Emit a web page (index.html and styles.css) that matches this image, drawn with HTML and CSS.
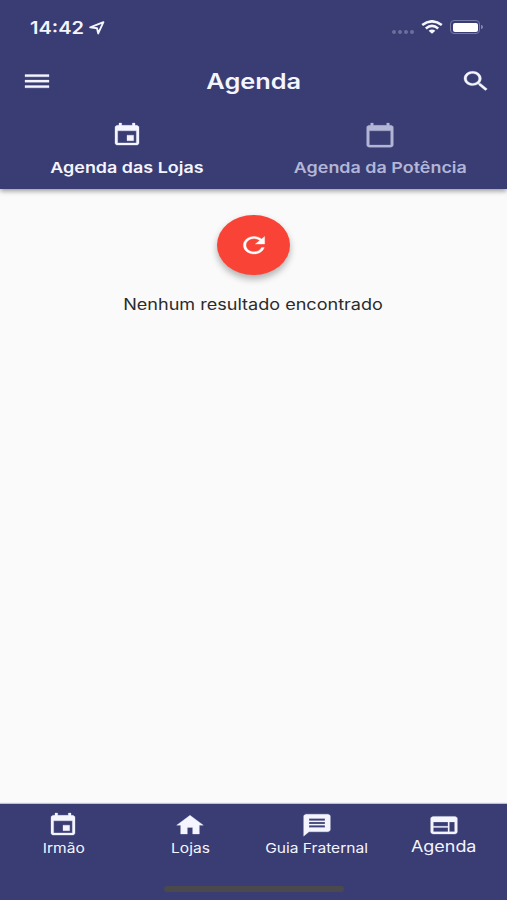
FILE: index.html
```
<!DOCTYPE html>
<html lang="pt-BR">
<head>
  <meta charset="UTF-8" />
  <meta name="viewport" content="width=device-width, initial-scale=1.0"/>
  <title>Agenda</title>
  <link rel="stylesheet" href="styles.css">
</head>
<body>
  <header class="header">
    <div class="status-bar">
      <div class="status-left">
        <span class="text time">14:42</span>
        <svg class="location" viewBox="0 0 16 14"><path d="M1.2 6.4L14.4 1.2L9.2 12.4L8 7.2Z" fill="none" stroke="currentColor" stroke-width="1.9" stroke-linejoin="round"/></svg>
      </div>
      <div class="status-right">
        <div class="signal"><i></i><i></i><i></i><i></i></div>
        <svg class="wifi" viewBox="0 0 22 14">
          <g fill="none" stroke="currentColor" stroke-width="2.6">
            <path d="M1.2 5Q11 -2.4 20.8 5"/>
            <path d="M4.8 8.5Q11 3.4 17.2 8.5"/>
          </g>
          <path d="M7.6 10.8Q11 8 14.4 10.8L11 13.7Z" fill="currentColor"/>
        </svg>
        <div class="battery"><div class="battery-level"></div></div>
      </div>
    </div>

    <div class="app-bar">
      <svg class="icon" viewBox="0 0 24 24" preserveAspectRatio="none"><path d="M3 18h18v-2H3v2zm0-5h18v-2H3v2zm0-7v2h18V6H3z"/></svg>
      <h1 class="text title">Agenda</h1>
      <svg class="icon" viewBox="0 0 24 24" preserveAspectRatio="none"><path d="M15.5 14h-.79l-.28-.27C15.41 12.59 16 11.11 16 9.5 16 5.91 13.09 3 9.5 3S3 5.91 3 9.5 5.91 16 9.5 16c1.61 0 3.09-.59 4.23-1.57l.27.28v.79l5 4.99L20.49 19l-4.99-5zm-6 0C7.01 14 5 11.99 5 9.5S7.01 5 9.5 5 14 7.01 14 9.5 11.99 14 9.5 14z"/></svg>
    </div>

    <nav class="tabs">
      <div class="tab active">
        <svg class="icon" viewBox="0 0 24 24" preserveAspectRatio="none"><path d="M17 12h-5v5h5v-5zM16 1v2H8V1H6v2H5c-1.11 0-1.99.9-1.99 2L3 19c0 1.1.89 2 2 2h14c1.1 0 2-.9 2-2V5c0-1.1-.9-2-2-2h-1V1h-2zm3 18H5V8h14v11z"/></svg>
        <span class="text tab-label">Agenda das Lojas</span>
      </div>
      <div class="tab">
        <svg class="icon" viewBox="0 0 24 24" preserveAspectRatio="none"><path d="M20 3h-1V1h-2v2H7V1H5v2H4c-1.1 0-2 .9-2 2v16c0 1.1.9 2 2 2h16c1.1 0 2-.9 2-2V5c0-1.1-.9-2-2-2zm0 18H4V8h16v13z"/></svg>
        <span class="text tab-label">Agenda da Potência</span>
      </div>
    </nav>
  </header>

  <main class="content">
    <button class="refresh" aria-label="Atualizar">
      <svg class="icon" viewBox="0 0 24 24" preserveAspectRatio="none"><path d="M17.65 6.35C16.2 4.9 14.21 4 12 4c-4.42 0-7.99 3.58-7.99 8s3.57 8 7.99 8c3.73 0 6.84-2.55 7.73-6h-2.08c-.82 2.33-3.04 4-5.65 4-3.31 0-6-2.69-6-6s2.69-6 6-6c1.66 0 3.14.69 4.22 1.78L13 11h7V4l-2.35 2.35z"/></svg>
    </button>
    <p class="text message">Nenhum resultado encontrado</p>
  </main>

  <footer class="bottom">
    <nav class="bottom-nav">
      <div class="nav-item">
        <svg class="icon" viewBox="0 0 24 24" preserveAspectRatio="none"><path d="M17 12h-5v5h5v-5zM16 1v2H8V1H6v2H5c-1.11 0-1.99.9-1.99 2L3 19c0 1.1.89 2 2 2h14c1.1 0 2-.9 2-2V5c0-1.1-.9-2-2-2h-1V1h-2zm3 18H5V8h14v11z"/></svg>
        <span class="text nav-label">Irmão</span>
      </div>
      <div class="nav-item">
        <svg class="icon" viewBox="0 0 24 24" preserveAspectRatio="none"><path d="M10 20v-6h4v6h5v-8h3L12 3 2 12h3v8z"/></svg>
        <span class="text nav-label">Lojas</span>
      </div>
      <div class="nav-item">
        <svg class="icon" viewBox="0 0 24 24" preserveAspectRatio="none"><path d="M20 2H4c-1.1 0-1.99.9-1.99 2L2 22l4-4h14c1.1 0 2-.9 2-2V4c0-1.1-.9-2-2-2zM6 9h12v2H6V9zm12 5H6v-2h12v2zm0-6H6V6h12v2z"/></svg>
        <span class="text nav-label">Guia Fraternal</span>
      </div>
      <div class="nav-item selected">
        <svg class="icon" viewBox="0 0 24 24" preserveAspectRatio="none"><path d="M20 4H4c-1.1 0-1.99.9-1.99 2L2 18c0 1.1.9 2 2 2h16c1.1 0 2-.9 2-2V6c0-1.1-.9-2-2-2zm-5 14H4v-4h11v4zm0-5H4V9h11v4zm5 5h-4V9h4v9z"/></svg>
        <span class="text nav-label">Agenda</span>
      </div>
    </nav>
    <div class="home-indicator"></div>
  </footer>
</body>
</html>
```
FILE: styles.css
```
* {
  box-sizing: border-box;
}

body {
  margin: 0;
  height: 900px;
  display: flex;
  flex-direction: column;
  font-family: Inter, 'Liberation Sans', sans-serif;
  background-color: #fafafa;
  color: #f4f5ff;
  overflow: hidden;
}

svg {
  display: block;
  flex: none;
}

/* wide lettering */
.text {
  display: block;
  margin: 0;
  white-space: nowrap;
  transform: scaleX(1.18);
}

.icon {
  width: 32px;
  height: 26.4px;
  fill: currentColor;
  stroke: currentColor;
  stroke-width: 0.25;
}

.header {
  height: 189px;
  background-color: #393d73;
  box-shadow: 0 2px 5px rgba(0, 0, 0, 0.4);
}

.status-bar {
  height: 54px;
  padding: 0 27px 0 30px;
  display: flex;
  justify-content: space-between;
  align-items: center;
}

.status-left,
.status-right {
  display: flex;
  align-items: center;
}

.status-left {
  gap: 13px;
}

.time {
  padding-top: 1px;
  font-size: 17px;
  line-height: 20px;
  font-weight: 600;
  transform-origin: left;
}

.location {
  width: 16px;
  height: 14px;
  margin-top: 1px;
}

.signal {
  display: flex;
  gap: 2px;
  margin: 9px 7px 0 0;
}

.signal i {
  width: 4px;
  height: 4px;
  border-radius: 50%;
  background-color: #6c6f9b;
}

.wifi {
  width: 22px;
  height: 14px;
  margin-right: 7px;
}

.battery {
  position: relative;
  width: 30px;
  height: 14px;
  padding: 1.5px;
  border: 1px solid #777ba4;
  border-radius: 4px;
}

.battery::after {
  content: "";
  position: absolute;
  right: -4px;
  top: 4px;
  width: 2px;
  height: 4px;
  border-radius: 0 2px 2px 0;
  background-color: #8488ae;
}

.battery-level {
  height: 9px;
  border-radius: 2px;
  background-color: #fff;
}

.app-bar {
  height: 54px;
  padding: 0 15px 0 21px;
  display: grid;
  grid-template-columns: 32px 1fr 32px;
  justify-items: center;
  align-items: center;
}

.title {
  padding-right: 5px;
  font-size: 21.5px;
  font-weight: 600;
}

.tabs {
  display: grid;
  grid-template-columns: 1fr 1fr;
}

.tab {
  padding-top: 13.5px;
  display: flex;
  flex-direction: column;
  align-items: center;
  color: #b3b6d6;
}

.tab.active {
  color: #f4f5ff;
}

.tab-label {
  margin-top: 10px;
  font-size: 15.2px;
  line-height: 20px;
  font-weight: 600;
}

.content {
  flex: 1;
  padding-top: 26px;
  display: flex;
  flex-direction: column;
  align-items: center;
}

.refresh {
  width: 73px;
  height: 60px;
  padding: 0;
  display: flex;
  justify-content: center;
  align-items: center;
  border: none;
  border-radius: 50%;
  background-color: #f94336;
  color: #fff;
  box-shadow: 0 4px 7px rgba(0, 0, 0, 0.3);
}

.message {
  margin-top: 20px;
  font-size: 15.3px;
  line-height: 20px;
  color: #2b2b2b;
}

.bottom {
  height: 96px;
  background-color: #393d73;
  box-shadow: 0 -1px 1px rgba(57, 61, 115, 0.3);
}

.bottom-nav {
  height: 82px;
  display: grid;
  grid-template-columns: repeat(4, 1fr);
}

.nav-item {
  padding-top: 8px;
  display: flex;
  flex-direction: column;
  align-items: center;
}

.nav-label {
  margin-top: 1px;
  font-size: 13.2px;
  line-height: 18px;
}

.selected .nav-label {
  margin-top: 0;
  font-size: 15.2px;
}

.home-indicator {
  width: 180px;
  height: 6px;
  margin: 0 auto;
  border-radius: 3px;
  background-color: #4a4a4c;
}
```
